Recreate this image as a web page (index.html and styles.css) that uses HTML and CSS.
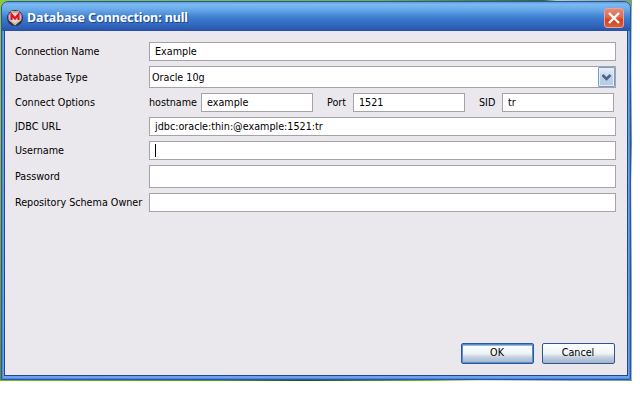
FILE: index.html
```html
<!DOCTYPE html>
<html lang="en">
<head>
<meta charset="utf-8">
<title>Database Connection</title>
<link rel="stylesheet" href="styles.css">
</head>
<body>
<div class="desktop">
  <div class="window">
    <header class="titlebar">
      <svg class="app-icon" width="16" height="16" viewBox="0 0 16 16">
        <circle cx="8" cy="8" r="8" fill="#2c2c58"/>
        <path d="M4 1h8l3 4v4L8 15 1 9V5z" fill="#7c80a0"/>
        <path d="M4 2h8M2 9.500l6 5 6-5" fill="none" stroke="#e0c460" stroke-width="1.500"/>
        <path d="M3 3h10l1 4-1 3-5 3.500L3 10 2 7z" fill="#dcd4dc"/>
        <path d="M4.500 10V4.500L8 8.500l3.500-4V10" fill="none" stroke="#e01424" stroke-width="2.200"/>
      </svg>
      <h1 class="title">Database Connection: null</h1>
      <div class="close"><svg width="20" height="20" viewBox="0 0 20 20"><path d="M5 5l10 10M15 5L5 15" stroke="#fff" stroke-width="2.300"/></svg></div>
    </header>
    <main class="content">
      <div class="row"><span class="label snug">Connection Name</span><div class="field"><span>Example</span></div></div>
      <div class="row"><span class="label wide">Database Type</span><div class="field combo"><span>Oracle 10g</span><div class="arrow"><svg width="15" height="18" viewBox="0 0 15 18"><path d="M3.500 7l4 4 4-4" fill="none" stroke="#4d6185" stroke-width="2.500"/></svg></div></div></div>
      <div class="row"><span class="label">Connect Options</span>
        <div class="options">
          <span class="hostname">hostname</span><div class="field"><span>example</span></div>
          <span class="port">Port</span><div class="field"><span>1521</span></div>
          <span class="sid">SID</span><div class="field"><span>tr</span></div>
        </div>
      </div>
      <div class="row"><span class="label">JDBC URL</span><div class="field"><span>jdbc:oracle:thin:@example:1521:tr</span></div></div>
      <div class="row"><span class="label">Username</span><div class="field"><i class="caret"></i></div></div>
      <div class="row"><span class="label">Password</span><div class="field tall"></div></div>
      <div class="row"><span class="label">Repository Schema Owner</span><div class="field"></div></div>
      <div class="actions"><div class="button default">OK</div><div class="button">Cancel</div></div>
    </main>
  </div>
</div>
</body>
</html>
```
FILE: styles.css
```css
* { box-sizing: border-box; }
body {
  margin: 0;
  background: #fff;
  color: #000;
  font: 10.7px/13px "DejaVu Sans Condensed", "DejaVu Sans", sans-serif;
  font-stretch: condensed;
}
.desktop {
  width: 632px;
  height: 381px;
  padding: 1px;
  background:
    linear-gradient(90deg, #76b82a, #4f9a20 35%, #22520d 48%, #78b832 68%, #e0ecd0 76%, #8faab4 90%, #7aa07c) 0 100% / 100% 1px no-repeat,
    linear-gradient(90deg, #8cca3c, #72b52e 60%, #2f6d18 86%, #b8d0a8 88%, #7ea070) 0 0 / 100% 6px no-repeat,
    linear-gradient(#8cc63c, #a5c91c 30%, #79aa1c 70%, #5f9420) 0 0 / 5px 100% no-repeat,
    linear-gradient(#93ad8c, #cfdce8 18%, #6d9860 38%, #e4edf4 48%, #8ba291 75%, #a0b8bc) 100% 0 / 5px 100% no-repeat;
}
.window {
  display: flex;
  flex-direction: column;
  width: 630px;
  height: 379px;
  overflow: hidden;
  border: 1px solid #2455b4;
  border-radius: 7px 7px 0 0;
  background: #6ea2e4;
  padding: 0 3px 3px;
  box-shadow: inset 0 0 0 1px #4f88dc;
}
.titlebar {
  display: flex;
  flex: none;
  align-items: center;
  height: 29px;
  margin: 0 -3px;
  padding: 3px 6px 0 5px;
  background: linear-gradient(#5c9ae4, #7db9f2 8%, #6aaaea 25%, #4284d4 50%, #3a79cc 58%, #3164bc 82%, #2850a8);
}
.app-icon { margin-right: 4px; }
.title {
  flex: 1;
  margin: 0;
  color: #fff;
  font: bold 12.5px/18px "Noto Sans", sans-serif;
  letter-spacing: -0.1px;
  white-space: nowrap;
  text-shadow: 1px 1px #20468e;
}
.close {
  width: 20px;
  height: 20px;
  border: 1px solid #e9a397;
  border-radius: 3px;
  background: linear-gradient(#e08a78, #dd6a50 45%, #d8401c 60%, #d6603c);
}
.close svg { display: block; margin: -1px; }
.content {
  display: flex;
  flex: 1;
  flex-direction: column;
  gap: 5px;
  border: 1px solid #1f45a0;
  border-width: 0 1px 1px;
  padding: 11px 11px 12px 10px;
  margin: 0 -1px;
  background: #ebe8ed;
}
.row {
  display: grid;
  grid-template-columns: 134px 467px;
  align-items: center;
  white-space: nowrap;
}
.snug { letter-spacing: -0.1px; }
.wide { letter-spacing: 0.15px; }
.field {
  display: flex;
  align-items: center;
  height: 19px;
  padding-left: 5px;
  border: 1px solid #a5a3a8;
  background: #fff;
}
.tall { height: 23px; }
.combo {
  justify-content: space-between;
  height: 22px;
  padding-left: 2px;
}
.arrow {
  width: 17px;
  height: 20px;
  border: 1px solid #7a9cc0;
  border-radius: 1px;
  background: linear-gradient(#e8f0f8, #bcd0e8 55%, #b4cce8);
  box-shadow: inset 0 0 0 1px #e4eef8;
}
.arrow svg { display: block; }
.options {
  display: grid;
  grid-template-columns: 52px 112px 40px 112px 37px 112px;
  align-items: center;
}
.port,
.sid { padding-left: 14px; }
.caret { width: 1px; height: 13px; background: #000; }
.actions {
  display: flex;
  justify-content: flex-end;
  gap: 8px;
  margin-top: auto;
  margin-bottom: -1px;
  margin-right: 1px;
}
.button {
  width: 73px;
  height: 21px;
  border: 1px solid #31548c;
  border-radius: 2px;
  background: linear-gradient(#fff, #eef4f6 50%, #c4d0e0 70%, #a0b4d0);
  line-height: 18px;
  text-align: center;
  text-indent: -1px;
}
.default {
  border-color: #2858a8;
  box-shadow: inset 0 0 0 1px #5c8ccc, inset 0 2px #90b8e8;
}
```
